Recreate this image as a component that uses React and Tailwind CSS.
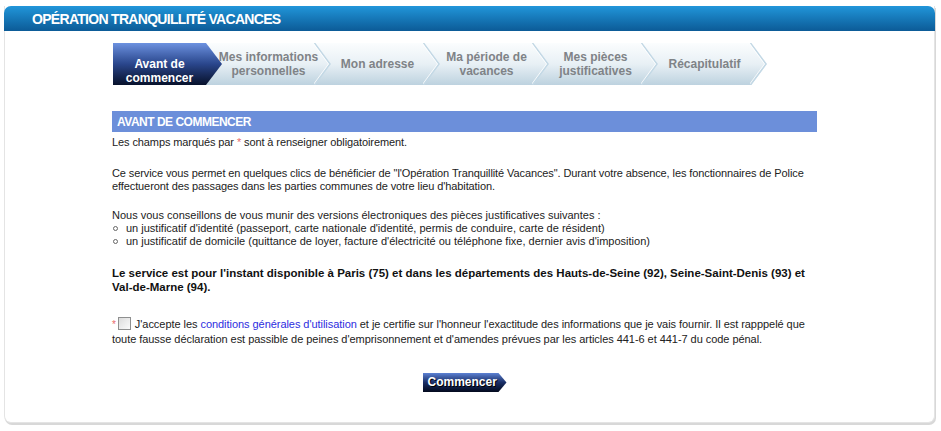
import React from 'react';

const steps = [
  { label: ['Avant de', 'commencer'], active: true, z: 'z-[6]' },
  { label: ['Mes informations', 'personnelles'], z: 'z-[5]' },
  { label: ['Mon adresse'], z: 'z-[4]' },
  { label: ['Ma période de', 'vacances'], z: 'z-[3]' },
  { label: ['Mes pièces', 'justificatives'], z: 'z-[2]' },
  { label: ['Récapitulatif'], z: 'z-[1]' },
];

const arrowClip =
  '[clip-path:polygon(0_0,calc(100%_-_16px)_0,100%_50%,calc(100%_-_16px)_100%,0_100%)]';

const Step = ({ step, first }) => (
  <div
    className={`relative ${step.z} h-[42px] flex items-center justify-center pr-[16px] ${
      first ? 'w-[109px]' : 'w-[125px] -ml-[16px] pl-[16px]'
    }`}
  >
    <div
      className={`absolute inset-0 ${arrowClip} ${
        step.active
          ? 'bg-gradient-to-b from-[#6d92e0] via-[#2a468c] to-[#08122c]'
          : 'bg-gradient-to-b from-[#fbfdfe] via-[#e8f0f5] to-[#bdd2df]'
      }`}
    />
    {!step.active && (
      <svg className="absolute right-0 top-0" width="17" height="42" viewBox="0 0 17 42">
        <polyline points="0.5,0 16,21 0.5,42" fill="none" stroke="#c3d8e5" strokeWidth="1.5" />
        <polyline points="-1,0 14.5,21 -1,42" fill="none" stroke="#ffffff" strokeWidth="1" opacity="0.8" />
      </svg>
    )}
    <div
      className={`relative text-center text-[12px] font-bold leading-[14px] whitespace-nowrap ${
        step.active ? 'text-white pt-[13px]' : 'text-[#7f8387]'
      }`}
    >
      {step.label.map((l) => (
        <div key={l}>{l}</div>
      ))}
    </div>
  </div>
);

const Bullet = ({ children }) => (
  <div className="flex items-center">
    <span className="ml-[1px] mr-[8px] w-[5px] h-[5px] rounded-full border border-[#666]" />
    <span>{children}</span>
  </div>
);

export default function App() {
  return (
    <div className="w-[941px] h-[431px] bg-white font-['Liberation_Sans',Arial,sans-serif] text-[#222]">
      <div className="ml-[4px] pt-[6px] w-[931px]">
        <div className="rounded-b-[7px] border border-t-0 border-[#e4e4e4] shadow-[1px_2px_0_#d8d8d8] bg-white">
          {/* title bar */}
          <div className="-mx-[1px] h-[25px] rounded-t-[7px] bg-gradient-to-b from-[#2196da] to-[#0c5b97] flex items-center pl-[28px]">
            <h1 className="text-white text-[14px] font-bold tracking-[-0.7px] leading-none">
              OPÉRATION TRANQUILLITÉ VACANCES
            </h1>
          </div>

          <div className="ml-[107px] w-[705px] pt-[12px] pb-[30px]">
            {/* steps */}
            <div className="flex ml-[1px]">
              {steps.map((s, i) => (
                <Step key={i} step={s} first={i === 0} />
              ))}
            </div>

            {/* section */}
            <div className="mt-[26px] h-[21px] bg-[#6c8fda] flex items-center pl-[5px]">
              <h2 className="text-white text-[12px] font-bold tracking-[-0.5px]">AVANT DE COMMENCER</h2>
            </div>

            <div className="text-[11px] leading-[13px] tracking-[-0.1px]">
              <p className="mt-[4px]">
                Les champs marqués par <span className="text-[#e86a6a]">*</span> sont à renseigner obligatoirement.
              </p>
              <p className="mt-[18px]">
                Ce service vous permet en quelques clics de bénéficier de "l'Opération Tranquillité Vacances". Durant
                votre absence, les fonctionnaires de Police effectueront des passages dans les parties communes de
                votre lieu d'habitation.
              </p>
              <div className="mt-[16px] tracking-normal">
                <p>Nous vous conseillons de vous munir des versions électroniques des pièces justificatives suivantes :</p>
                <Bullet>
                  un justificatif d'identité (passeport, carte nationale d'identité, permis de conduire, carte de
                  résident)
                </Bullet>
                <Bullet>
                  un justificatif de domicile (quittance de loyer, facture d'électricité ou téléphone fixe, dernier avis
                  d'imposition)
                </Bullet>
              </div>
              <p className="mt-[18px] text-[11.5px] leading-[14px] font-bold text-[#111] tracking-normal">
                Le service est pour l'instant disponible à Paris (75) et dans les départements des Hauts-de-Seine (92),
                Seine-Saint-Denis (93) et Val-de-Marne (94).
              </p>
              <p className="mt-[23px] leading-[15px] tracking-[-0.05px]">
                <span className="text-[#e86a6a] align-top text-[10px]">*</span>
                <span className="inline-block align-[-2px] ml-[2px] mr-[4px] w-[13px] h-[13px] border border-[#8e8f8f] bg-gradient-to-br from-[#dcdcdc] to-[#fbfbfb]" />
                J'accepte les <a className="text-[#2d2de0]">conditions générales d'utilisation</a> et je certifie sur
                l'honneur l'exactitude des informations que je vais fournir. Il est rapppelé que toute fausse
                déclaration est passible de peines d'emprisonnement et d'amendes prévues par les articles 441-6 et 441-7
                du code pénal.
              </p>
            </div>

            {/* button */}
            <div className="mt-[26px] flex justify-center">
              <button
                className={`h-[19px] w-[84px] pl-[5px] pr-[12px] text-left text-white text-[12px] font-bold leading-[19px] bg-gradient-to-b from-[#5d82d4] via-[#1a2e66] to-[#040a1e] [text-shadow:1px_1px_0_#000] [clip-path:polygon(0_0,calc(100%_-_8px)_0,100%_50%,calc(100%_-_8px)_100%,0_100%)]`}
              >
                Commencer
              </button>
            </div>
          </div>
        </div>
      </div>
    </div>
  );
}
